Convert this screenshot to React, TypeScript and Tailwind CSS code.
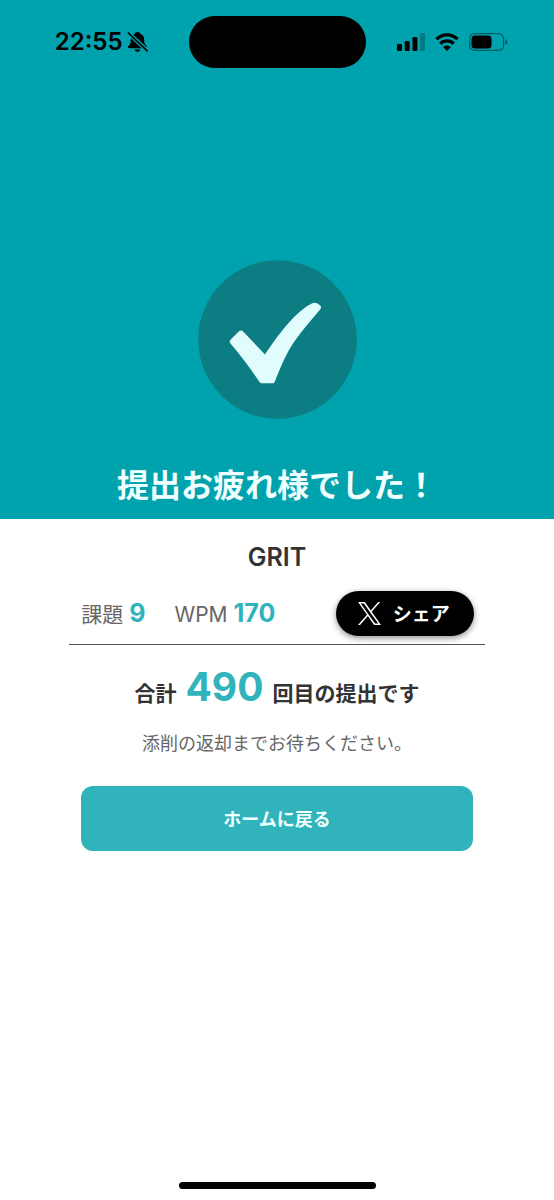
import type { ReactNode } from "react";

const TOTAL_SUBMISSIONS = 490;

const stats = [
  { label: "課題", value: 9 },
  { label: "WPM", value: 170 }
];

function StatusBar() {
  return (
    <div className="grid h-[84px] grid-cols-[1fr_177px_1fr] items-center text-black">
      <div className="flex items-center justify-end gap-1 pr-10">
        <span className="text-[24px] leading-8 font-semibold">22:55</span>
        <BellOffIcon />
      </div>
      <div className="h-[52px] rounded-full bg-black" />
      <div className="flex items-center gap-[10px] pl-[31px]">
        <SignalIcon />
        <WifiIcon />
        <BatteryIcon />
      </div>
    </div>
  );
}

function BellOffIcon() {
  return (
    <svg aria-hidden="true" width="22" height="22" viewBox="0 0 22 22">
      <path
        fill="currentColor"
        d="M10.500 1c-1.600 0-2.700.8-3 2-2.700 1-3.700 3.200-3.700 6 0 3.200-.6 4.200-2.300 5.900-.9.900-.4 2.300.8 2.300h16.400c1.200 0 1.700-1.400.8-2.300-1.700-1.700-2.300-2.700-2.300-5.900 0-2.800-1-5-3.700-6-.3-1.200-1.400-2-3-2Z M7.700 18.400h5.600c-.2 1.500-1.300 2.400-2.800 2.400s-2.600-.9-2.800-2.400Z"
      />
      <path d="M0 0.600 21.500 21" stroke="#00a3ad" strokeWidth="4.200" />
      <path d="M1.400 2 20.200 19.800" stroke="currentColor" strokeWidth="1.700" strokeLinecap="round" />
    </svg>
  );
}

function SignalIcon() {
  return (
    <svg aria-hidden="true" width="28" height="18" viewBox="0 0 28 18" fill="currentColor">
      <rect x="0" y="11" width="5" height="7" rx="1.300" />
      <rect x="7.700" y="8" width="5" height="10" rx="1.300" />
      <rect x="15.400" y="4" width="5" height="14" rx="1.300" />
      <rect x="23" y="0" width="5" height="18" rx="1.300" opacity="0.25" />
    </svg>
  );
}

function WifiIcon() {
  return (
    <svg aria-hidden="true" width="24" height="18" viewBox="0 0 24 18" fill="none" stroke="currentColor">
      <path d="M1.500 6.200C7.400.4 16.600.4 22.500 6.200" strokeWidth="3.400" />
      <path d="M5.300 10.700c3.800-3.700 9.600-3.700 13.400 0" strokeWidth="3.300" />
      <path d="M12 18 8.200 14.100c2.200-2 5.400-2 7.600 0Z" fill="currentColor" stroke="none" />
    </svg>
  );
}

function BatteryIcon() {
  return (
    <svg aria-hidden="true" width="39" height="18" viewBox="0 0 39 18">
      <rect x="0.600" y="0.600" width="34" height="16.800" rx="5" fill="none" stroke="currentColor" strokeWidth="1.200" opacity="0.45" />
      <rect x="2.500" y="2.500" width="20" height="13" rx="3.500" fill="currentColor" />
      <path d="M36.500 6.200c2.400.9 2.400 4.700 0 5.600Z" fill="currentColor" opacity="0.5" />
    </svg>
  );
}

function CheckBadge() {
  return (
    <svg role="img" aria-label="完了" width="160" height="160" viewBox="0 0 160 160">
      <circle cx="80.500" cy="79.500" r="79.300" fill="#0c7d83" />
      <path
        fill="#e0fcfd"
        d="M33.500 83.500c-1.100-1.300-1.100-2.600 0-3.800l8.200-8.100c1.500-1.500 3.300-1.500 4.700.1L68 94.500C84 70.500 100 51 114.800 43.600c2.200-1.100 4-1.100 6 .2l1.800 1.200c1.700 1.100 1.900 2.700.5 4.400-8.600 10-17.600 20.600-26.100 32.600C89.500 93 83.300 107.500 78 121.300c-.6 1.400-1.400 2-2.900 2H65.500c-1.700 0-2.500-.5-3.400-1.800C53.500 108.500 43.500 95.500 33.500 83.500Z"
      />
    </svg>
  );
}

function XLogo() {
  return (
    <svg aria-hidden="true" width="23" height="23" viewBox="0 0 24 24" fill="currentColor">
      <path d="M14.283 10.162 23.218 0h-2.117l-7.760 8.822L7.144 0H0l9.370 13.343L0 24h2.117l8.193-9.318L16.856 24H24l-9.717-13.838Zm-2.900 3.298-.95-1.325L2.880 1.560h3.252l6.096 8.533.95 1.325 7.924 11.095h-3.252l-6.467-9.053Z" />
    </svg>
  );
}

function Accent({ children }: { children: ReactNode }) {
  return <span className="text-[25px] font-bold text-[#30b3bb]">{children}</span>;
}

export default function App() {
  return (
    <div className="flex min-h-screen flex-col bg-white font-['Inter','Noto_Sans_CJK_JP',sans-serif] text-[#333]">
      <header className="flex flex-col bg-[#00a3ad]">
        <StatusBar />
        <div className="flex flex-col items-center gap-11 pt-44 pb-[11px]">
          <CheckBadge />
          <h1 className="text-[32px] leading-[44px] font-bold text-[#f0ffff]">提出お疲れ様でした！</h1>
        </div>
      </header>

      <main className="mx-auto flex w-3/4 grow flex-col">
        <h2 className="pt-5 text-center text-[25px] leading-9 font-semibold">GRIT</h2>

        <section className="mt-4 flex items-center justify-between border-b border-[#555] pr-[11px] pb-2 pl-3">
          <dl className="flex gap-[29px] text-[21px] leading-8 text-[#666]">
            {stats.map((stat) => (
              <div key={stat.label} className="flex items-baseline gap-[6px]">
                <dt>{stat.label}</dt>
                <dd>
                  <Accent>{stat.value}</Accent>
                </dd>
              </div>
            ))}
          </dl>
          <button
            type="button"
            className="flex h-[45px] items-center gap-3 rounded-full bg-black pr-6 pl-[22px] text-[19px] font-bold text-white shadow-[0_2px_6px_rgba(0,0,0,0.45)]"
          >
            <XLogo />
            <span className="pt-1">シェア</span>
          </button>
        </section>

        <p className="mt-4 flex items-baseline justify-center gap-[9px] text-[21px] leading-[52px] font-bold">
          合計
          <span className="text-[39px] text-[#30b3bb]">{TOTAL_SUBMISSIONS}</span>
          回目の提出です
        </p>
        <p className="mt-[10px] text-center text-[18px] leading-7 text-[#666]">添削の返却までお待ちください。</p>

        <button
          type="button"
          className="mx-3 mt-7 h-[65px] rounded-xl bg-[#30b3bb] pt-[2px] text-[18px] font-bold text-[#f0ffff]"
        >
          ホームに戻る
        </button>
      </main>

      <footer className="flex justify-center pb-[11px]">
        <div className="h-[7px] w-[197px] rounded-full bg-black" />
      </footer>
    </div>
  );
}
